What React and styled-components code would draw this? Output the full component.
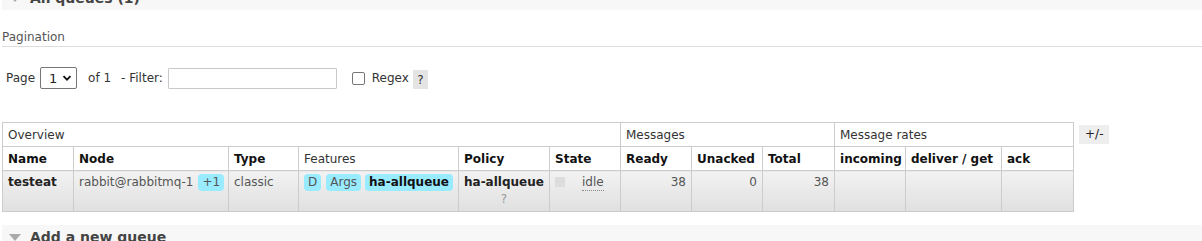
import React from "react";
import styled, { createGlobalStyle } from "styled-components";

const Global = createGlobalStyle`
  html, body { margin: 0; padding: 0; background: #fff; overflow: hidden; }
  body { font: 12px "DejaVu Sans", Verdana, sans-serif; color: #484848; }
`;

const Page = styled.div`
  width: 1202px;
  height: 241px;
  overflow: hidden;
  padding-left: 2px;
  box-sizing: border-box;
`;

const SectionBar = styled.div`
  display: flex;
  align-items: center;
  gap: 9px;
  height: 24px;
  padding-left: 7px;
  background: #f7f7f7;
  color: #444;
  font-size: 14px;
  font-weight: bold;
  margin-top: ${(p) => p.$top || 0}px;
`;

const Triangle = styled.span`
  width: 0;
  height: 0;
  border-left: 6px solid transparent;
  border-right: 6px solid transparent;
  border-top: 7px solid #aaa;
`;

const PagTitle = styled.div`
  margin-top: 19px;
  padding-bottom: 1px;
  line-height: 16px;
  color: #555;
  border-bottom: 1px solid #ddd;
`;

const Controls = styled.div`
  display: flex;
  align-items: center;
  height: 22px;
  margin-top: 20px;
  padding-left: 4px;
  color: #333;
`;

const SelectBox = styled.div`
  display: flex;
  align-items: center;
  justify-content: space-between;
  box-sizing: border-box;
  width: 37px;
  height: 22px;
  margin-left: 5px;
  padding: 0 4px 0 8px;
  border: 1px solid #767676;
  border-radius: 2px;
  color: #222;
  font-size: 13px;
`;

const Txt = styled.span`
  margin-left: ${(p) => p.$ml || 0}px;
`;

const FilterInput = styled.div`
  box-sizing: border-box;
  width: 169px;
  height: 21px;
  margin-left: 5px;
  border: 1px solid #c8c8c8;
  border-radius: 1px;
`;

const Check = styled.span`
  box-sizing: border-box;
  width: 13px;
  height: 13px;
  margin-left: 15px;
  border: 1px solid #767676;
  border-radius: 2px;
  background: #fff;
`;

const Help = styled.span`
  display: inline-flex;
  align-items: center;
  justify-content: center;
  width: 15px;
  height: 19px;
  margin-left: 4px;
  margin-top: 3px;
  background: #e4e4e4;
  color: #333;
`;

const TableRow = styled.div`
  display: flex;
  align-items: flex-start;
  margin-top: 33px;
`;

const List = styled.table`
  border-collapse: collapse;
  table-layout: fixed;
  width: 1071px;
  th, td {
    border: 1px solid #ccc;
    padding: 0 5px;
    text-align: left;
    vertical-align: top;
    overflow: hidden;
    white-space: nowrap;
  }
`;

const GroupTh = styled.th`
  && {
    font-weight: normal;
    color: #333;
    height: 23px;
    vertical-align: middle;
  }
`;

const ColTh = styled.th`
  && {
    font-weight: bold;
    color: #111;
    height: 23px;
    vertical-align: middle;
  }
`;

const DataRow = styled.tr`
  td {
    background: linear-gradient(#f2f2f2, #e0e0e0);
    height: 41px;
    padding-top: 3px;
    box-sizing: border-box;
    color: #555;
    line-height: 17px;
  }
`;

const Num = styled.td`
  && { text-align: right; }
`;

const Strong = styled.span`
  font-weight: bold;
  color: #222;
`;

const Badge = styled.span`
  display: inline-block;
  padding: 0 4px;
  margin-left: ${(p) => p.$ml || 0}px;
  line-height: 17px;
  border-radius: 4px;
  background: #99ebff;
  color: ${(p) => (p.$bold ? "#111" : "#555")};
  font-weight: ${(p) => (p.$bold ? "bold" : "normal")};
`;

const PolicyBox = styled.div`
  display: inline-flex;
  flex-direction: column;
  align-items: center;
`;

const Q = styled.span`
  color: #999;
`;

const StateBox = styled.div`
  display: flex;
  align-items: flex-start;
`;

const Square = styled.span`
  width: 10px;
  height: 10px;
  margin-top: 3px;
  background: #ddd;
`;

const Idle = styled.span`
  margin-left: 17px;
  border-bottom: 1px dotted #888;
  line-height: 16px;
`;

const PlusMinus = styled.div`
  margin-left: 5px;
  margin-top: 3px;
  padding: 0 6px;
  height: 19px;
  line-height: 19px;
  background: #eee;
  color: #222;
`;

const widths = [71, 155, 70, 160, 91, 71, 71, 71, 72, 71, 96, 72];

export default function App() {
  return (
    <>
      <Global />
      <Page>
        <SectionBar $top={-14}>
          <Triangle />
          <span>All queues (1)</span>
        </SectionBar>
        <PagTitle>Pagination</PagTitle>
        <Controls>
          <span>Page</span>
          <SelectBox>
            <span>1</span>
            <svg width="10" height="10" viewBox="0 0 10 10">
              <path d="M1.5 3.2 L5 6.7 L8.5 3.2" fill="none" stroke="#111" strokeWidth="1.8" />
            </svg>
          </SelectBox>
          <Txt $ml={11}>of 1</Txt>
          <Txt $ml={10}>- Filter:</Txt>
          <FilterInput />
          <Check />
          <Txt $ml={7}>Regex</Txt>
          <Help>?</Help>
        </Controls>
        <TableRow>
          <List>
            <colgroup>
              {widths.map((w, i) => (
                <col key={i} style={{ width: w }} />
              ))}
            </colgroup>
            <thead>
              <tr>
                <GroupTh colSpan={6}>Overview</GroupTh>
                <GroupTh colSpan={3}>Messages</GroupTh>
                <GroupTh colSpan={3}>Message rates</GroupTh>
              </tr>
              <tr>
                <ColTh>Name</ColTh>
                <ColTh>Node</ColTh>
                <ColTh>Type</ColTh>
                <GroupTh as="th">Features</GroupTh>
                <ColTh>Policy</ColTh>
                <ColTh>State</ColTh>
                <ColTh>Ready</ColTh>
                <ColTh>Unacked</ColTh>
                <ColTh>Total</ColTh>
                <ColTh>incoming</ColTh>
                <ColTh>deliver / get</ColTh>
                <ColTh>ack</ColTh>
              </tr>
            </thead>
            <tbody>
              <DataRow>
                <td><Strong>testeat</Strong></td>
                <td>
                  rabbit@rabbitmq-1<Badge $ml={5}>+1</Badge>
                </td>
                <td>classic</td>
                <td>
                  <Badge>D</Badge>
                  <Badge $ml={5}>Args</Badge>
                  <Badge $ml={4} $bold>ha-allqueue</Badge>
                </td>
                <td>
                  <PolicyBox>
                    <Strong>ha-allqueue</Strong>
                    <Q>?</Q>
                  </PolicyBox>
                </td>
                <td>
                  <StateBox>
                    <Square />
                    <Idle>idle</Idle>
                  </StateBox>
                </td>
                <Num>38</Num>
                <Num>0</Num>
                <Num>38</Num>
                <td></td>
                <td></td>
                <td></td>
              </DataRow>
            </tbody>
          </List>
          <PlusMinus>+/-</PlusMinus>
        </TableRow>
        <SectionBar $top={13}>
          <Triangle />
          <span>Add a new queue</span>
        </SectionBar>
      </Page>
    </>
  );
}
